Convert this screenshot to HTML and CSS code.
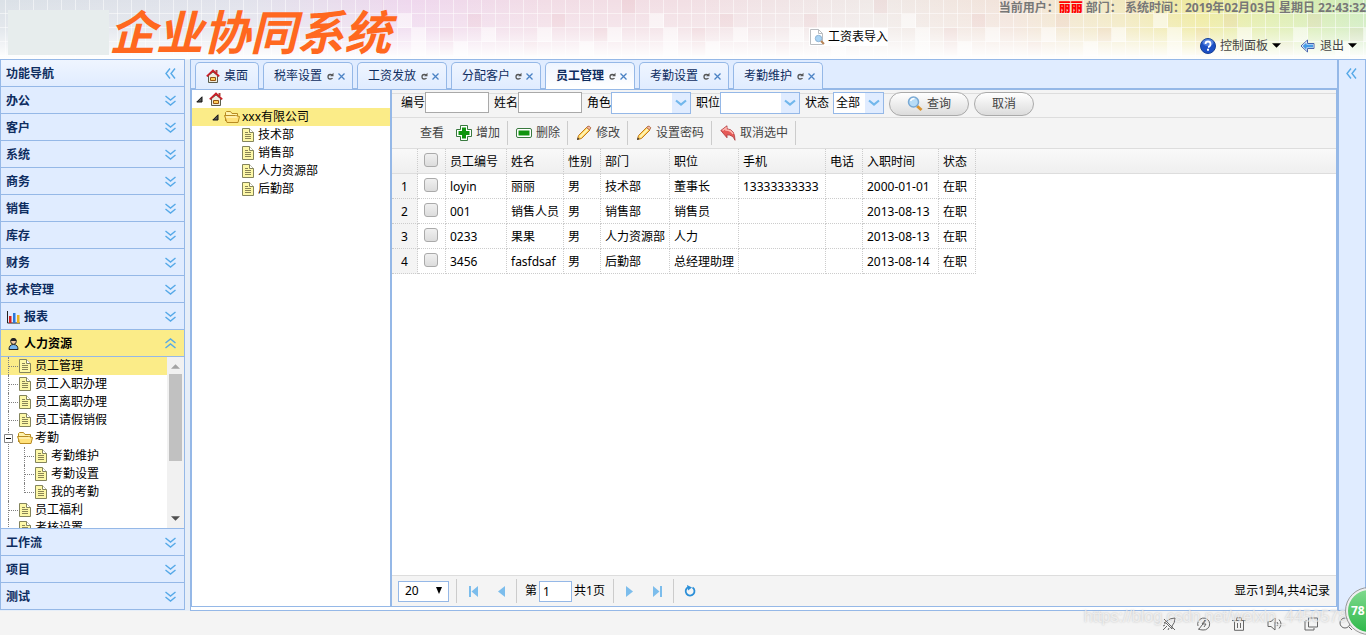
FILE: index.html
```html
<!DOCTYPE html>
<html lang="zh-CN">
<head>
<meta charset="utf-8">
<title>企业协同系统</title>
<link rel="stylesheet" href="styles.css">
</head>
<body>
<svg class="defs" aria-hidden="true">
  <symbol id="dbl-down" viewBox="0 0 11 11"><path d="M.5 1l5 4 5-4M.5 6l5 4 5-4" fill="none" stroke="#56a9e8" stroke-width="1.4"/></symbol>
  <symbol id="dbl-up" viewBox="0 0 11 11"><path d="M.5 5l5-4 5 4M.5 10l5-4 5 4" fill="none" stroke="#56a9e8" stroke-width="1.4"/></symbol>
  <symbol id="dbl-left" viewBox="0 0 11 11"><path d="M5 .5l-4 5 4 5M10 .5l-4 5 4 5" fill="none" stroke="#56a9e8" stroke-width="1.4"/></symbol>
  <symbol id="home" viewBox="0 0 14 14"><path d="M2.500 6.500v7h9v-7L7 3z" fill="#efece2" stroke="#5b5d4d"/><path d="M9.500 1h2v3h-2z" fill="#a7443b"/><path d="M.8 7.400L7 1.600l6.200 5.800" fill="none" stroke="#c91d26" stroke-width="1.800"/><path d="M4.500 8.500h5v3h-5z" fill="#ffd05a" stroke="#965514"/></symbol>
  <symbol id="page" viewBox="0 0 12 14"><path d="M.5.5h7l4 4v9H.5z" fill="#fdf8a8" stroke="#84845c"/><path d="M7.500.5v4h4" fill="#fff" stroke="#84845c"/><path d="M3 4.500h3M3 6.500h6M3 8.500h6M3 10.500h6" stroke="#898456"/></symbol>
  <symbol id="folder" viewBox="0 0 16 14"><path d="M1.500 11V2.500l1-1h4l1.500 2h5.500V6" fill="#fff3ad" stroke="#b88b22"/><path d="M.5 5.500h11l4 1-1.500 6H3z" fill="#ffe17a" stroke="#b88b22"/><path d="M2 7h11" stroke="#fffbd8"/></symbol>
  <symbol id="open" viewBox="0 0 7 7"><path d="M6 .8V6H.8z" fill="#555" stroke="#111"/></symbol>
  <symbol id="pencil" viewBox="0 0 16 16"><path d="M1.500 14.500l1-4L11 2l3 3-8.500 8.500z" fill="#ffd35c" stroke="#c07a1e"/><path d="M4 12l8-8" stroke="#fff3b5" stroke-width="1.800"/><path d="M10.500 2.500L12 1.200q1.500-.5 2.800 1.600L13.500 5z" fill="#f6b9a3" stroke="#b4704b"/><path d="M1 15l.7-2.500L3.500 14z" fill="#333"/></symbol>
  <symbol id="caret" viewBox="0 0 10 6"><path d="M0 0h10L5 5z" fill="#000"/></symbol>
  <symbol id="reload" viewBox="0 0 7 8"><path d="M5 3.500Q4.500 2.500 3.200 2.500 1 2.500 1 4.800T3.200 7Q4.800 7 5.500 6" fill="none" stroke="#555" stroke-width="1.300"/><path d="M6.500.8v3.400H3.200z" fill="#555"/></symbol>
  <symbol id="close" viewBox="0 0 7 7"><path d="M.5.5l6 6M6.500.5l-6 6" stroke="#4b82c4" stroke-width="1.300"/></symbol>
  <symbol id="combo" viewBox="0 0 12 8"><path d="M1 1.500l5 4 5-4" fill="none" stroke="#71b7ec" stroke-width="2.200"/></symbol>
  <symbol id="prev" viewBox="0 0 7 11"><path d="M7 0v11L0 5.500z" fill="#7cbdec"/></symbol>
  <symbol id="first" viewBox="0 0 9 11"><path d="M0 0h2v11H0zM9 0v11L2.500 5.500z" fill="#7cbdec"/></symbol>
</svg>

<header class="top">
  <svg class="mosaic" aria-hidden="true">
    <defs>
      <linearGradient id="hue"><stop offset="0" stop-color="#dbe1e7"/><stop offset=".18" stop-color="#e2e3ec"/><stop offset=".3" stop-color="#efd8ee"/><stop offset=".4" stop-color="#f2dde6"/><stop offset=".5" stop-color="#f2dfe4"/><stop offset=".64" stop-color="#f0eae8"/><stop offset=".74" stop-color="#f2e3da"/><stop offset=".82" stop-color="#f1e8bf"/><stop offset=".88" stop-color="#eee99a"/><stop offset=".93" stop-color="#dfedab"/><stop offset="1" stop-color="#cdebbc"/></linearGradient>
      <linearGradient id="fade" x2="0" y2="1"><stop offset="0" stop-color="#fff" stop-opacity="0"/><stop offset=".5" stop-color="#fff" stop-opacity=".25"/><stop offset="1" stop-color="#fff"/></linearGradient>
      <pattern id="grid" width="14" height="14" patternUnits="userSpaceOnUse"><path d="M5.500 0v14M0 13.500h14" stroke="#fff" stroke-opacity=".5" fill="none"/></pattern>
      <pattern id="tiles" width="252" height="56" patternUnits="userSpaceOnUse"><path d="M34 28h14v14H34zM104 28h14v14h-14zM146 14h14v14h-14zM160 28h14v28h-14zM202 42h14v14h-14zM230 28h14v14h-14zM76 42h14v14H76z" fill="#fff" fill-opacity=".55"/><path d="M20 42h14v14H20zM48 14h14v14H48zM118 0h14v14h-14zM90 28h14v14H90zM188 28h14v28h-14zM216 14h14v14h-14z" fill="#d86f7c" fill-opacity=".09"/></pattern>
    </defs>
    <rect width="100%" height="100%" fill="url(#hue)"/>
    <rect x="28%" width="72%" height="100%" fill="url(#tiles)"/>
    <rect width="100%" height="100%" fill="url(#grid)"/>
    <rect width="100%" height="100%" fill="url(#fade)"/>
  </svg>
  <div class="brand"><span class="brand-box"></span><h1>企业协同系统</h1></div>
  <button class="import"><svg width="16" height="16" viewBox="0 0 16 16"><path d="M1.500.5h8l4 4v11h-12z" fill="#fff" stroke="#b9bcc0"/><path d="M9.500.5v4h4" fill="none" stroke="#b9bcc0"/><circle cx="9.500" cy="9.500" r="3.200" fill="#a9d4f5" stroke="#8eb3d4"/><path d="M12 12l3 3" stroke="#b98455" stroke-width="2"/></svg>工资表导入</button>
  <div class="account">
    <p>当前用户：<b class="user">丽丽</b> 部门： 系统时间：2019年02月03日 星期日 22:43:32</p>
    <nav class="account-menu">
      <button><svg width="16" height="16" viewBox="0 0 16 16"><circle cx="8" cy="8" r="7.500" fill="#1c50c4" stroke="#163f95"/><ellipse cx="8" cy="4.500" rx="5.500" ry="3.500" fill="#76a0ee" opacity=".6"/><path d="M5.500 6q0-2.500 2.500-2.500T10.500 6 8 9" fill="none" stroke="#fff" stroke-width="1.800"/><path d="M7 10.800h2v2H7z" fill="#fff"/></svg>控制面板<svg width="9" height="6"><use href="#caret"/></svg></button>
      <button><svg width="16" height="14" viewBox="0 0 16 14"><path d="M7.500 1v3.500H14v5H7.500V13L1 7z" fill="#fff" stroke="#4763ad"/><path d="M6.500 3.500v2H13v3H6.500v2.500L2.500 7z" fill="#459be6"/></svg>退出<svg width="9" height="6"><use href="#caret"/></svg></button>
    </nav>
  </div>
</header>

<div class="shell">
  <aside class="side">
    <div class="side-row side-title">功能导航<svg width="11" height="11"><use href="#dbl-left"/></svg></div>
    <button class="side-row">办公<svg width="11" height="11"><use href="#dbl-down"/></svg></button>
    <button class="side-row">客户<svg width="11" height="11"><use href="#dbl-down"/></svg></button>
    <button class="side-row">系统<svg width="11" height="11"><use href="#dbl-down"/></svg></button>
    <button class="side-row">商务<svg width="11" height="11"><use href="#dbl-down"/></svg></button>
    <button class="side-row">销售<svg width="11" height="11"><use href="#dbl-down"/></svg></button>
    <button class="side-row">库存<svg width="11" height="11"><use href="#dbl-down"/></svg></button>
    <button class="side-row">财务<svg width="11" height="11"><use href="#dbl-down"/></svg></button>
    <button class="side-row">技术管理<svg width="11" height="11"><use href="#dbl-down"/></svg></button>
    <button class="side-row"><span class="with-icon"><svg width="14" height="14" viewBox="0 0 14 14"><path d="M1.500 1v12H14" fill="none" stroke="#222"/><path d="M3 6h2.500v7H3z" fill="#d92222"/><path d="M7 3h2.500v10H7z" fill="#2b77d8"/><path d="M11 5h2.500v8H11z" fill="#e9b21d"/></svg>报表</span><svg width="11" height="11"><use href="#dbl-down"/></svg></button>
    <button class="side-row current" aria-expanded="true"><span class="with-icon"><svg width="14" height="14" viewBox="0 0 14 14"><path d="M3 12.500q0-5 4.500-5t4.500 5z" fill="#77b7ef" stroke="#222"/><circle cx="7.500" cy="4.500" r="2.800" fill="#f1c9a0" stroke="#222"/><path d="M4.500 4q0-3 3-3t3 3z" fill="#222"/></svg>人力资源</span><svg width="11" height="11"><use href="#dbl-up"/></svg></button>
    <div class="side-tree">
      <ul class="nav">
        <li class="on"><a href="#"><svg width="12" height="14"><use href="#page"/></svg>员工管理</a></li>
        <li><a href="#"><svg width="12" height="14"><use href="#page"/></svg>员工入职办理</a></li>
        <li><a href="#"><svg width="12" height="14"><use href="#page"/></svg>员工离职办理</a></li>
        <li><a href="#"><svg width="12" height="14"><use href="#page"/></svg>员工请假销假</a></li>
        <li class="branch"><a href="#"><svg class="minus" width="9" height="9" viewBox="0 0 9 9"><path d="M.5.5h8v8h-8z" fill="#fff" stroke="#848484"/><path d="M2 4.500h5" stroke="#000"/></svg><svg width="16" height="14"><use href="#folder"/></svg>考勤</a>
          <ul>
            <li><a href="#"><svg width="12" height="14"><use href="#page"/></svg>考勤维护</a></li>
            <li><a href="#"><svg width="12" height="14"><use href="#page"/></svg>考勤设置</a></li>
            <li><a href="#"><svg width="12" height="14"><use href="#page"/></svg>我的考勤</a></li>
          </ul>
        </li>
        <li><a href="#"><svg width="12" height="14"><use href="#page"/></svg>员工福利</a></li>
        <li><a href="#"><svg width="12" height="14"><use href="#page"/></svg>考核设置</a></li>
      </ul>
      <div class="scroll" aria-hidden="true"><svg width="9" height="5" viewBox="0 0 10 5"><path d="M0 5h10L5 0z" fill="#a3a3a3"/></svg><span class="thumb"></span><svg width="9" height="5" viewBox="0 0 10 5"><path d="M0 0h10L5 5z" fill="#505050"/></svg></div>
    </div>
    <button class="side-row">工作流<svg width="11" height="11"><use href="#dbl-down"/></svg></button>
    <button class="side-row">项目<svg width="11" height="11"><use href="#dbl-down"/></svg></button>
    <button class="side-row">测试<svg width="11" height="11"><use href="#dbl-down"/></svg></button>
  </aside>

  <main class="center">
    <nav class="tabs">
      <button class="tab home"><svg width="14" height="14"><use href="#home"/></svg>桌面</button>
      <button class="tab"><span>税率设置</span><svg width="7" height="8"><use href="#reload"/></svg><svg width="7" height="7"><use href="#close"/></svg></button>
      <button class="tab"><span>工资发放</span><svg width="7" height="8"><use href="#reload"/></svg><svg width="7" height="7"><use href="#close"/></svg></button>
      <button class="tab"><span>分配客户</span><svg width="7" height="8"><use href="#reload"/></svg><svg width="7" height="7"><use href="#close"/></svg></button>
      <button class="tab active"><span>员工管理</span><svg width="7" height="8"><use href="#reload"/></svg><svg width="7" height="7"><use href="#close"/></svg></button>
      <button class="tab"><span>考勤设置</span><svg width="7" height="8"><use href="#reload"/></svg><svg width="7" height="7"><use href="#close"/></svg></button>
      <button class="tab"><span>考勤维护</span><svg width="7" height="8"><use href="#reload"/></svg><svg width="7" height="7"><use href="#close"/></svg></button>
    </nav>
    <div class="work">
      <ul class="org">
        <li class="l0"><svg width="7" height="7"><use href="#open"/></svg><svg width="14" height="14"><use href="#home"/></svg></li>
        <li class="l1 on"><svg width="7" height="7"><use href="#open"/></svg><a href="#"><svg width="16" height="14"><use href="#folder"/></svg>xxx有限公司</a></li>
        <li class="l2"><a href="#"><svg width="12" height="14"><use href="#page"/></svg>技术部</a></li>
        <li class="l2"><a href="#"><svg width="12" height="14"><use href="#page"/></svg>销售部</a></li>
        <li class="l2"><a href="#"><svg width="12" height="14"><use href="#page"/></svg>人力资源部</a></li>
        <li class="l2"><a href="#"><svg width="12" height="14"><use href="#page"/></svg>后勤部</a></li>
      </ul>
      <section class="grid">
        <form class="search">
          <label>编号<input type="text"></label>
          <label>姓名<input type="text"></label>
          <label>角色<span class="combo"><select><option></option></select><svg width="12" height="8"><use href="#combo"/></svg></span></label>
          <label>职位<span class="combo"><select><option></option></select><svg width="12" height="8"><use href="#combo"/></svg></span></label>
          <label class="state">状态<span class="combo small"><select><option>全部</option></select><svg width="12" height="8"><use href="#combo"/></svg></span></label>
          <button type="button" class="pill wide"><svg width="16" height="16" viewBox="0 0 16 16"><path d="M10 10l4.500 4" stroke="#d99432" stroke-width="3"/><circle cx="6.500" cy="6" r="5" fill="#b7dcf7" stroke="#79a9d4" stroke-width="1.500"/><path d="M3.500 5q1-2.500 4-2.500" fill="none" stroke="#fff" stroke-width="1.500"/></svg>查询</button>
          <button type="button" class="pill">取消</button>
        </form>
        <div class="tools">
          <button class="plain">查看</button>
          <button><svg width="16" height="16" viewBox="0 0 16 16"><path d="M4.500.5h7v4h4v7h-4v4h-7v-4h-4v-7h4z" fill="#fff" stroke="#39793f"/><path d="M6 2.500h4V6h3.500v4H10v3.500H6V10H2.500V6H6z" fill="#10940f"/></svg>增加</button>
          <button><svg width="16" height="16" viewBox="0 0 16 16"><rect x=".5" y="3.500" width="15" height="9" rx="1.500" fill="#fff" stroke="#39793f"/><path d="M2.500 5.500h11v5h-11z" fill="#10940f"/></svg>删除</button>
          <button><svg width="16" height="16"><use href="#pencil"/></svg>修改</button>
          <button><svg width="16" height="16"><use href="#pencil"/></svg>设置密码</button>
          <button><svg width="16" height="16" viewBox="0 0 16 16"><path d="M.8 5.500L7 .8v3q8 .5 8 11.500-2-5.500-8-5.500v3z" fill="#e65a57" stroke="#a9373b" stroke-width=".8"/><path d="M2.500 5.500L6 3v2q5 0 7 4" fill="none" stroke="#ffb9b3" stroke-width="1.500"/></svg>取消选中</button>
        </div>
        <div class="data">
          <table>
            <thead><tr><th class="no"></th><th class="check"><input type="checkbox" aria-label="全选"></th><th class="w61">员工编号</th><th class="w57">姓名</th><th class="w37">性别</th><th class="w69">部门</th><th class="w69">职位</th><th class="w87">手机</th><th class="w37">电话</th><th class="w76">入职时间</th><th class="w37">状态</th><th class="rest"></th></tr></thead>
            <tbody>
              <tr><td class="no">1</td><td class="check"><input type="checkbox" aria-label="loyin"></td><td>loyin</td><td>丽丽</td><td>男</td><td>技术部</td><td>董事长</td><td>13333333333</td><td></td><td>2000-01-01</td><td>在职</td></tr>
              <tr><td class="no">2</td><td class="check"><input type="checkbox" aria-label="001"></td><td>001</td><td>销售人员</td><td>男</td><td>销售部</td><td>销售员</td><td></td><td></td><td>2013-08-13</td><td>在职</td></tr>
              <tr><td class="no">3</td><td class="check"><input type="checkbox" aria-label="0233"></td><td>0233</td><td>果果</td><td>男</td><td>人力资源部</td><td>人力</td><td></td><td></td><td>2013-08-13</td><td>在职</td></tr>
              <tr><td class="no">4</td><td class="check"><input type="checkbox" aria-label="3456"></td><td>3456</td><td>fasfdsaf</td><td>男</td><td>后勤部</td><td>总经理助理</td><td></td><td></td><td>2013-08-14</td><td>在职</td></tr>
            </tbody>
          </table>
        </div>
        <footer class="pager">
          <span class="size"><select aria-label="每页条数"><option>20</option></select><svg width="8" height="7" viewBox="0 0 8 7"><path d="M1 0h6L4 7z"/></svg></span>
          <i class="sep"></i>
          <button aria-label="首页"><svg width="9" height="11"><use href="#first"/></svg></button>
          <button aria-label="上一页"><svg width="7" height="11"><use href="#prev"/></svg></button>
          <i class="sep"></i>
          <label>第<input type="text" value="1">共1页</label>
          <i class="sep"></i>
          <button aria-label="下一页"><svg class="flip" width="7" height="11"><use href="#prev"/></svg></button>
          <button aria-label="末页"><svg class="flip" width="9" height="11"><use href="#first"/></svg></button>
          <i class="sep"></i>
          <button aria-label="刷新"><svg width="12" height="12" viewBox="0 0 12 12"><path d="M8.500 2.500A4.400 4.400 0 1 1 4 2.300" fill="none" stroke="#2b8fd8" stroke-width="1.800"/><path d="M3 0l5 2.500L4 5.500z" fill="#2b8fd8"/></svg></button>
          <span class="total">显示1到4,共4记录</span>
        </footer>
      </section>
    </div>
  </main>
  <aside class="east"><svg width="11" height="11"><use href="#dbl-left"/></svg></aside>
</div>

<footer class="status">
  <svg width="14" height="14" viewBox="0 0 14 14"><path d="M5 4q3-3 8-3 0 5-3 8v3l-2-2-4-4H2zM1 13l4-4M1 9l2-1M6 13l1-2M2 2l11 11"/></svg>
  <svg width="14" height="14" viewBox="0 0 14 14"><path d="M2 12L9 3M1 12q3 1 5 1a6 6 0 1 0-5-4M8 3L5 7h4l-2 3"/></svg>
  <svg width="14" height="14" viewBox="0 0 14 14"><path d="M0 3.500h14M4.500 3V.8h5V3M2.500 4v9.300h9V4M5.500 6v5M8.500 6v5"/></svg>
  <svg width="16" height="14" viewBox="0 0 16 14"><path d="M1 4.500h3L8 1v12L4 9.500H1zM10 5q2 2 0 4M12 2.500q4 4.500 0 9"/></svg>
  <svg width="14" height="14" viewBox="0 0 14 14"><path d="M4.500 1h9v9h-9zM3 4H1v9h9v-2"/></svg>
  <svg width="14" height="14" viewBox="0 0 14 14"><circle cx="6" cy="6" r="5"/><path d="M10 10l3 3"/></svg>
</footer>
<div class="mark">https://blog.csdn.net/weixin_44505789</div>
<div class="ball">78</div>
</body>
</html>
```
FILE: styles.css
```css
* { box-sizing: border-box; }
body {
  margin: 0;
  height: 100vh;
  display: flex;
  flex-direction: column;
  position: relative;
  overflow: hidden;
  background: #f4f4f4;
  color: #000;
  font: 12px/18px "Noto Sans", "Noto Sans CJK SC", sans-serif;
}
button, input, select { font: inherit; color: inherit; margin: 0; padding: 0; }
button { border: 0; background: none; white-space: nowrap; }
a { color: inherit; text-decoration: none; display: flex; align-items: center; }
ul { list-style: none; margin: 0; padding: 0; }
svg { flex: none; display: block; }
.defs { position: absolute; width: 0; height: 0; }

/* Banner */
.top { position: relative; display: flex; height: 59px; flex: none; }
.mosaic { position: absolute; inset: 0; width: 100%; height: 100%; }
.brand { position: relative; display: flex; align-items: flex-start; padding: 10px 0 0 8px; width: 809px; }
.brand-box { width: 101px; height: 45px; background: #e7eded; }
.brand h1 { margin: 0; color: #ff681f; font: italic bold 47px/40px "Noto Sans CJK SC", sans-serif; white-space: nowrap; }
.import { position: relative; display: flex; align-items: center; gap: 3px; margin: 28px 0 0; height: 18px; background: #fff; align-self: flex-start; }
.account { position: relative; flex: 1; display: flex; flex-direction: column; align-items: flex-end; justify-content: space-between; }
.account p { margin: 0; line-height: 16px; font-weight: bold; color: #777; white-space: nowrap; }
.user { color: #f00; }
.account-menu { display: flex; gap: 19px; padding: 0 9px 4px 0; }
.account-menu button { display: flex; align-items: center; gap: 4px; color: #444; }

/* Page frame */
.shell { flex: 1; display: flex; min-height: 0; background: #e6eef8; }
.side { width: 185px; flex: none; display: flex; flex-direction: column; margin-bottom: 1px; border: 1px solid #95b8e7; border-bottom: 0; background: #fff; }
.side-row {
  height: 27px;
  flex: none;
  display: flex;
  align-items: center;
  justify-content: space-between;
  padding: 2px 8px 0 5px;
  background: #e0ecff;
  border-bottom: 1px solid #95b8e7;
  color: #0e2d5f;
  font-weight: bold;
}
.side-row > svg { margin-bottom: 2px; }
.side-title { background: linear-gradient(#eff5ff, #e0ecff); }
.side-row.current { background: #fbec88; color: #000; }
.with-icon { display: flex; align-items: center; gap: 4px; }
.side-tree { flex: 1; min-height: 0; display: flex; overflow: hidden; border-bottom: 1px solid #95b8e7; }
.nav { flex: 1; overflow: hidden; }
.nav li { position: relative; padding-left: 18px; }
.nav a { height: 18px; gap: 4px; white-space: nowrap; }
.nav .on { background: #fbec88; }
.nav .branch { padding-left: 3px; }
.nav .branch > a { gap: 2px; }
.nav .branch .minus { position: relative; z-index: 1; margin-right: 2px; }
.nav ul li { margin-left: 13px; }
.nav li::before { content: ""; position: absolute; left: 7px; top: 0; height: 100%; border-left: 1px dotted #808080; }
.nav li::after { content: ""; position: absolute; left: 8px; top: 9px; width: 9px; border-top: 1px dotted #808080; }
.nav .branch::after { width: 0; }
.nav ul li:last-child::before { height: 10px; }
.scroll { width: 17px; background: #f1f1f1; display: flex; flex-direction: column; align-items: center; padding: 7px 0; }
.thumb { width: 13px; height: 87px; margin: 5px 0 auto; background: #c1c1c1; }

/* Workspace */
.center { flex: 1; min-width: 0; display: flex; flex-direction: column; margin: 0 0 0 5px; border: 1px solid #95b8e7; background: #fff; padding-bottom: 3px; }
.tabs { display: flex; gap: 4px; height: 30px; flex: none; padding: 2px 4px 0; background: #e0ecff; border-bottom: 2px solid #95b8e7; }
.tab {
  display: flex;
  align-items: center;
  gap: 4px;
  width: 90px;
  height: 27px;
  padding: 0 7px 0 10px;
  border: 1px solid #95b8e7;
  border-bottom: 0;
  border-radius: 5px 5px 0 0;
  background: linear-gradient(#eff5ff, #e0ecff);
  color: #0e2d5f;
}
.tab span { flex: 1; text-align: left; }
.tab.home { width: 64px; }
.tab.active { background: linear-gradient(#eff5ff, #fff); font-weight: bold; }
.work { flex: 1; min-height: 0; display: flex; border: 1px solid #95b8e7; border-width: 0 1px 1px; }
.org { width: 200px; flex: none; border-right: 2px solid #95b8e7; }
.org li { height: 18px; display: flex; align-items: center; gap: 6px; padding-left: 4px; }
.org a { gap: 4px; }
.org .l1 { padding-left: 20px; gap: 5px; }
.org .l1 a { gap: 2px; }
.org .l2 { padding-left: 50px; }
.org .on { background: #fbec88; }
.grid { flex: 1; min-width: 0; display: flex; flex-direction: column; }

/* Filters and actions */
.search { display: flex; gap: 5px; height: 28px; flex: none; padding: 2px 9px 0; background: linear-gradient(#f4f4f4 3px, #ddd 3px, #ddd 4px, #f4f4f4 4px); border-bottom: 1px solid #ddd; }
.search label { display: flex; height: 22px; line-height: 21px; white-space: nowrap; }
.search input { width: 64px; height: 21px; border: 1px solid #a9a9a9; background: #fff; }
.combo { position: relative; width: 80px; }
.combo select { appearance: none; display: block; width: 100%; height: 22px; padding: 0 2px; line-height: 18px; border: 1px solid #95b8e7; border-radius: 0; background: linear-gradient(to left, #e0ecff 18px, #fff 18px); }
.combo svg { position: absolute; right: 4px; top: 7px; pointer-events: none; }
.combo.small { width: 51px; }
.search .state { gap: 4px; }
.pill { display: flex; align-items: center; justify-content: center; gap: 4px; width: 60px; height: 24px; border: 1px solid #aaa; border-radius: 12px; background: linear-gradient(#fff, #dcdcdc); color: #444; }
.pill.wide { width: 80px; }
.tools { display: flex; align-items: center; height: 31px; flex: none; padding-left: 20px; background: #f4f4f4; border-bottom: 1px solid #ddd; color: #444; }
.tools button { display: flex; align-items: center; gap: 4px; height: 24px; padding: 0 7px 0 8px; border-right: 1px solid #ccc; }
.tools .plain { padding-right: 4px; border: 0; }

/* Employee table */
.data { flex: 1; min-height: 0; background: #fff; }
table { width: 100%; table-layout: fixed; border-collapse: separate; border-spacing: 0; }
th, td { height: 25px; padding: 2px 4px 0; border-right: 1px dotted #ccc; border-bottom: 1px dotted #ccc; text-align: left; font-weight: normal; white-space: nowrap; line-height: 18px; }
thead th { background: linear-gradient(#f9f9f9, #efefef); border-bottom: 1px solid #ddd; }
.no { width: 26px; padding: 2px 0 0; text-align: center; }
td.no { background: #f4f4f4; }
.check { width: 28px; padding: 0; text-align: center; }
.check input { appearance: none; display: block; width: 14px; height: 14px; margin: -2px 0 0 6px; border: 1px solid #aaa; border-radius: 3px; background: linear-gradient(#f0f0f0, #dcdcdc); }
.w37 { width: 37px; }
.w57 { width: 57px; }
.w61 { width: 61px; }
.w69 { width: 69px; }
.w76 { width: 76px; }
.w87 { width: 87px; }
.rest { border-right: 0; }

/* Pager */
.pager { display: flex; align-items: center; height: 31px; flex: none; padding: 0 6px; background: #f4f4f4; border-top: 1px solid #ddd; }
.size { position: relative; width: 51px; margin-right: 6px; }
.size select { appearance: none; display: block; width: 100%; height: 21px; padding: 0 6px; border: 1px solid #95b8e7; border-radius: 0; background: #fff; }
.size svg { position: absolute; right: 6px; top: 6px; pointer-events: none; }
.sep { width: 1px; height: 24px; margin: 0 2px 0 1px; background: #ccc; }
.pager button { width: 28px; height: 24px; display: flex; align-items: center; justify-content: center; }
.pager label { display: flex; align-items: center; gap: 2px; padding: 0 7px 0 6px; }
.pager input { width: 33px; height: 21px; padding: 0 3px; border: 1px solid #95b8e7; background: #fff; }
.flip { transform: scaleX(-1); }
.total { margin-left: auto; }

.east { width: 28px; flex: none; padding: 8px 7px; background: #e0ecff; border: 1px solid #95b8e7; }

/* Bottom strip */
.status { height: 24px; flex: none; display: flex; align-items: flex-end; justify-content: flex-end; gap: 21px; padding: 0 13px 4px; }
.status svg { fill: none; stroke: #666; stroke-width: 1; }
.ball { position: absolute; right: -26px; bottom: 1px; width: 46px; height: 46px; border: 2px solid #eee; border-radius: 50%; outline: 1px solid #999; background: linear-gradient(#7fd98d, #2fb94b); color: #fff; font-weight: bold; line-height: 42px; padding-left: 3px; }
.mark { position: absolute; right: 10px; bottom: 9px; color: rgba(255, 255, 255, .6); font: 16px/18px "Liberation Sans", sans-serif; text-shadow: 0 0 2px rgba(150, 150, 150, .6); pointer-events: none; }
```
